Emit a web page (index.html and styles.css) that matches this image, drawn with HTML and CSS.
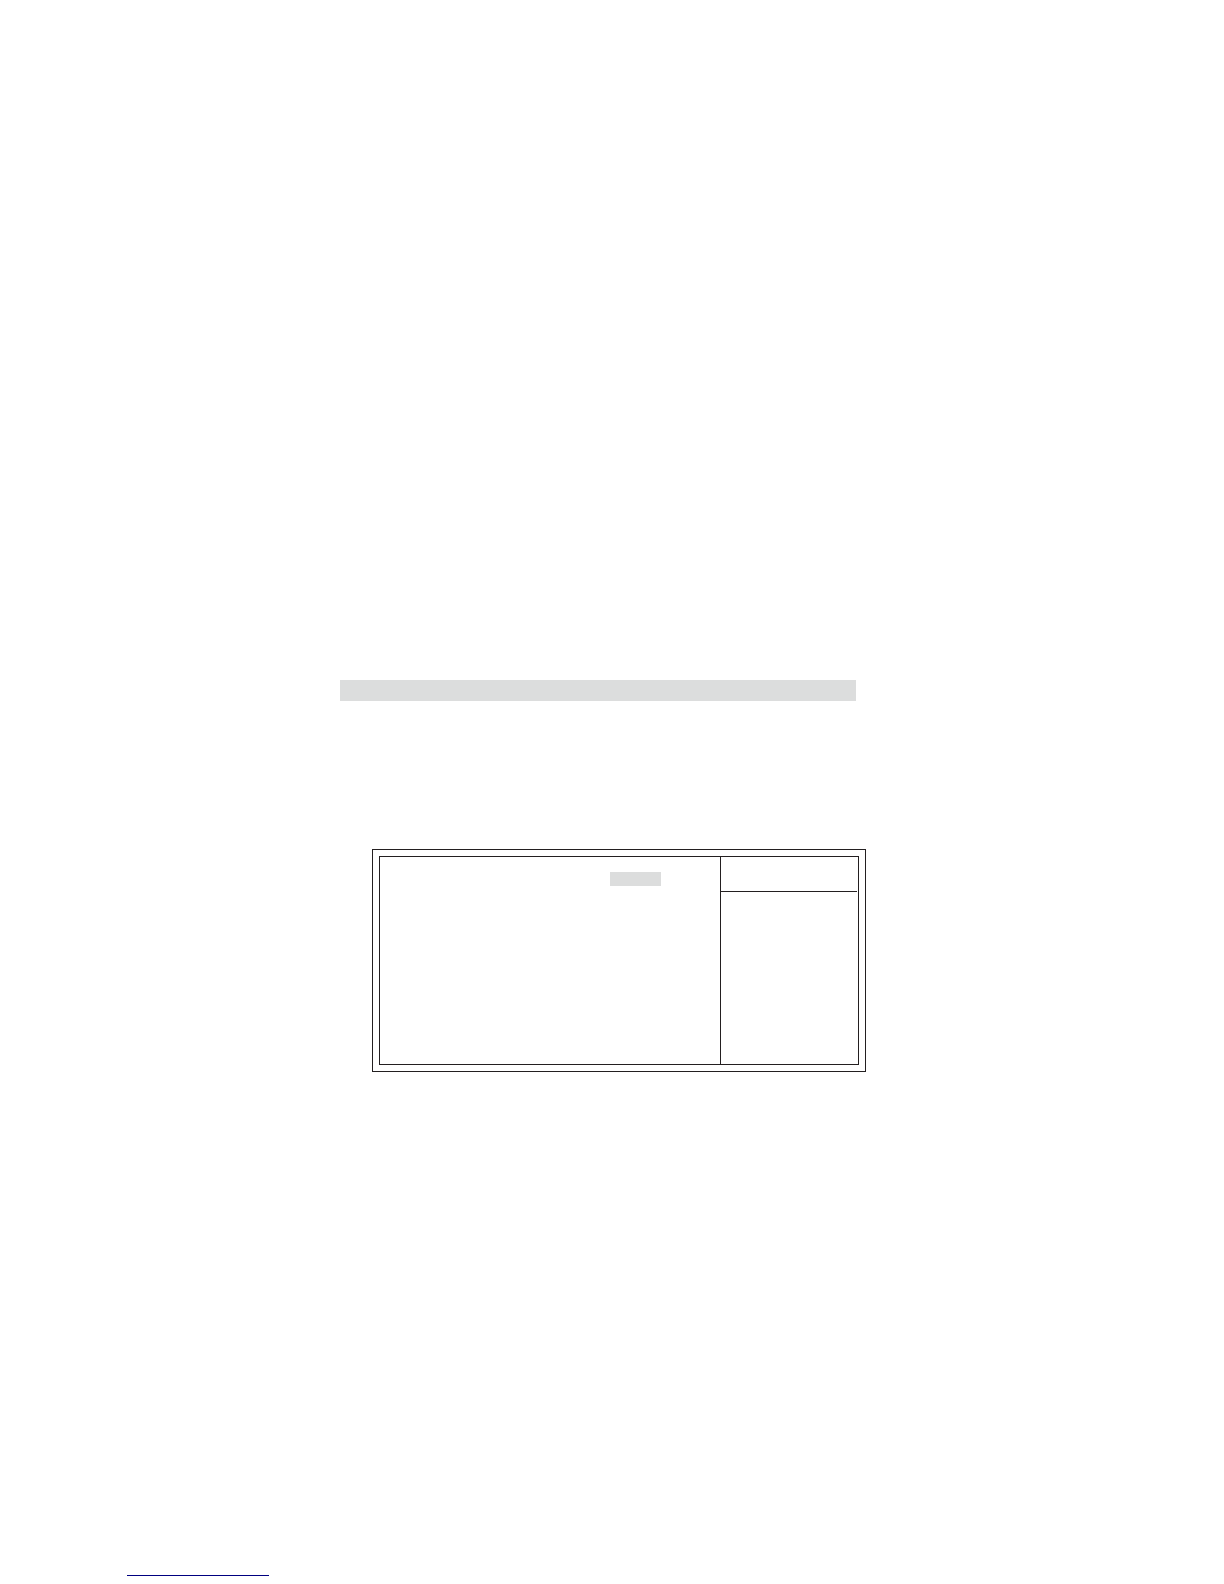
FILE: index.html
```html
<!DOCTYPE html>
<html lang="en">
<head>
  <meta charset="UTF-8" />
  <meta name="viewport" content="width=device-width, initial-scale=1.0" />
  <title>Setup</title>
  <link rel="stylesheet" href="styles.css">
</head>
<body>
  <main>
    <div class="band"></div>
    <div class="screen">
      <div class="panes">
        <section class="options">
          <div class="selected"></div>
        </section>
        <aside class="help">
          <div class="help-header"></div>
        </aside>
      </div>
    </div>
  </main>
  <footer><div class="underline"></div></footer>
</body>
</html>
```

FILE: styles.css
```css
* { box-sizing: border-box; }
body {
  margin: 0;
  min-height: 100vh;
  background: #fff;
  font-family: "Liberation Sans", Arial, sans-serif;
  display: flex;
  flex-direction: column;
}
main {
  padding: 680px 358px 0 340px;
}
.band {
  height: 21px;
  margin-right: 10px;
  background: #dcdddd;
}
/* double frame around the setup screen */
.screen {
  margin: 148px 0 0 32px;
  padding: 6px;
  border: 1px solid #231f20;
}
.panes {
  display: flex;
  min-height: 209px;
  border: 1px solid #231f20;
}
.options {
  flex: 1;
  display: flex;
  justify-content: flex-end;
  align-items: flex-start;
  padding: 15px 59px 15px 15px;
}
.selected {
  width: 51px;
  height: 14px;
  background: #dcdddd;
}
.help {
  width: 138px;
  padding-right: 1px;
  border-left: 1px solid #231f20;
}
.help-header {
  height: 35px;
  border-bottom: 1px solid #231f20;
}
footer {
  margin-top: auto;
  padding: 0 127px 8px;
}
.underline {
  width: 142px;
  border-bottom: 1px solid #000080;
}
```
